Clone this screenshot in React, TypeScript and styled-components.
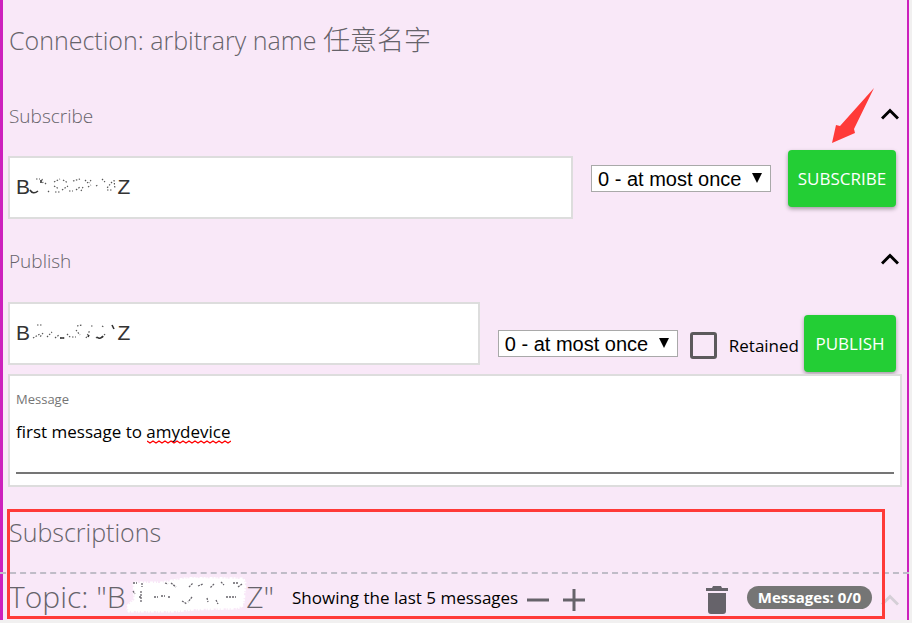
import React, { useState } from "react";
import styled, { createGlobalStyle } from "styled-components";

const sans = `"Open Sans", "Noto Sans CJK SC", sans-serif`;
const red = "#ff3a38";

const GlobalStyle = createGlobalStyle`
  *, *::before, *::after { box-sizing: border-box; }
  body { margin: 0; background: #f1f0f0; font-family: ${sans}; color: #000; }
`;

const Page = styled.main`
  position: relative;
  margin-right: 3px;
  border-left: 3px solid #cd20bd;
  border-right: 2px solid #cd20bd;
  background: #f9e8f8;
`;

const Title = styled.h1`
  margin: 0;
  padding: 20px 6px 0;
  font-size: 25px;
  line-height: 40px;
  font-weight: 300;
  color: #66636a;
`;

const HanName = styled.span`
  font-size: 27px;
  line-height: 1;
`;

const SectionHead = styled.div<{ $top: number }>`
  display: flex;
  align-items: center;
  justify-content: space-between;
  height: 32px;
  margin-top: ${(p) => p.$top}px;
  padding: 0 8px 0 6px;
`;

const SectionTitle = styled.h2`
  margin: 0;
  font-size: 19px;
  line-height: 32px;
  font-weight: 300;
  color: #66636a;
`;

const IconButton = styled.button`
  display: flex;
  padding: 0;
  border: 0;
  background: none;
  color: inherit;
  cursor: pointer;
`;

const HeadToggle = styled(IconButton)`
  margin-bottom: 4px;
`;

const Row = styled.form<{ $top: number }>`
  display: flex;
  align-items: flex-start;
  margin: ${(p) => p.$top}px 0 0;
  padding: 0 11px 0 5px;
`;

const TopicField = styled.div<{ $top: number }>`
  position: relative;
  flex: 1;
  height: 63px;
  margin: ${(p) => p.$top}px 18px 0 0;
  border: 2px solid #dddddd;
  background: #fff;
`;

const TopicInput = styled.input`
  display: block;
  width: 100%;
  height: 58px;
  padding: 0 6px;
  border: 0;
  outline: 0;
  background: transparent;
  font: 21px "Liberation Sans", sans-serif;
  color: #333;
`;

const Specks = styled.svg`
  position: absolute;
  left: 6px;
  top: 20px;
  pointer-events: none;
`;

const SelectWrap = styled.div<{ $top: number; $gap: number }>`
  position: relative;
  width: 180px;
  margin: ${(p) => p.$top}px ${(p) => p.$gap}px 0 0;
`;

const Select = styled.select`
  appearance: none;
  display: block;
  width: 100%;
  height: 27px;
  padding: 0 6px;
  border: 1px solid #a9a9a9;
  border-radius: 0;
  background: #fff;
  font: 20px "Liberation Sans", sans-serif;
  color: #000;
`;

const Caret = styled.svg`
  position: absolute;
  right: 9px;
  top: 8px;
  pointer-events: none;
`;

const ActionButton = styled.button<{ $width: number; $top: number }>`
  flex: none;
  width: ${(p) => p.$width}px;
  height: 57px;
  margin-top: ${(p) => p.$top}px;
  padding: 0;
  border: 0;
  border-radius: 4px;
  background: #23ce35;
  box-shadow: 0 2px 4px rgba(0, 0, 0, 0.35);
  color: #fff;
  font: 400 17px ${sans};
  cursor: pointer;
`;

const Retained = styled.label`
  display: flex;
  align-items: center;
  height: 30px;
  margin: 28px 5px 0 0;
  gap: 12px;
  font-size: 17px;
`;

const Checkbox = styled.input`
  appearance: none;
  width: 27px;
  height: 27px;
  margin: 0;
  border: 3px solid #5c5a5c;
  border-radius: 3px;
`;

const MessageBox = styled.div`
  position: relative;
  height: 113px;
  margin: 2px 5px 0;
  padding: 13px 6px 0;
  border: 2px solid #dddddd;
  background: #fff;
`;

const MessageLabel = styled.label`
  display: block;
  font-size: 13px;
  line-height: 20px;
  color: #757575;
`;

const MessageInput = styled.textarea`
  display: block;
  width: 100%;
  height: 65px;
  padding: 9px 0 0;
  border: 0;
  border-bottom: 2px solid #757575;
  outline: 0;
  resize: none;
  background: transparent;
  font: 17px/28px ${sans};
  color: #000;
`;

const Squiggle = styled.svg`
  position: absolute;
  left: 137px;
  top: 64px;
  pointer-events: none;
`;

const Subscriptions = styled.h1`
  height: 85px;
  margin: 0;
  padding: 24px 6px 0;
  font-size: 25px;
  line-height: 42px;
  font-weight: 300;
  color: #66636a;
`;

const TopicRow = styled.section`
  display: flex;
  align-items: center;
  height: 48px;
  margin: 0 -2px 0 -3px;
  padding: 0 10px 0 9px;
  border-top: 2px dashed #c0bcc8;
`;

const TopicName = styled.h2`
  position: relative;
  display: flex;
  justify-content: space-between;
  width: 265px;
  margin: 0 18px 0 0;
  font-size: 30px;
  line-height: 44px;
  font-weight: 300;
  color: #66636a;
`;

const Scribble = styled.svg`
  position: absolute;
  left: 116px;
  top: 2px;
`;

const Showing = styled.span`
  width: 235px;
  font-size: 17px;
`;

const CountButtons = styled.div`
  display: flex;
  flex: 1;
  gap: 14px;
  padding-top: 5px;
  color: #66636a;
`;

const TrashButton = styled(IconButton)`
  margin: 6px 19px 0 0;
  color: #66636a;
`;

const Badge = styled.span`
  width: 125px;
  height: 23px;
  margin: 0 9px 0 0;
  border-radius: 12px;
  background: #757575;
  color: #fff;
  font-size: 15px;
  font-weight: 700;
  line-height: 23px;
  text-align: center;
`;

const TopicToggle = styled(IconButton)`
  margin-top: 5px;
`;

const Highlight = styled.div`
  position: absolute;
  left: 4px;
  right: 22px;
  bottom: 1px;
  height: 110px;
  border: 3px solid ${red};
  pointer-events: none;
`;

const Arrow = styled.svg`
  position: absolute;
  right: 31px;
  top: 87px;
  pointer-events: none;
`;

const Chevron = ({ color = "#000" }: { color?: string }) => (
  <svg width="18" height="12" viewBox="0 0 18 12">
    <path d="M1 10.5 9 2.5 17 10.5" fill="none" stroke={color} strokeWidth="3" />
  </svg>
);

const speckPaths = [
  "M20 1h4M26 1l1 4M29 5l2 2M32 14l2-2M38 4l6-3M38 8l5 3M39 14h5M47 2l5 3M46 12l6-4M53 13h4M57 3l7-2M60 12l4-3M65 13l2-4M69 2l3 3M72 9l3-2M75 2l-2 3M80 8l2-1M86 1l3 3M91 12h5M96 4l-5 6M98 2l1 9",
  "M17 14l7-4M21 1h6M27 9l-3 4M31 13l5-5M39 14l4-3M44 14h6M51 10l4 4M56 13h4M61 2l5-1M60 6l4 5M70 14l4-8M75 2h3M80 13l2 2M89 10l-3 4M86 2l2 1",
];

const solidSpecks = [
  "M14 12q3 5 8 1M25 2v3",
  "M44 14h4M72 13l1-2M81 13q3 3 6-1M96 1l2 4",
];

const hidden = "\u00a0".repeat(15);

function ObscuredTopic({ label, top, variant }: { label: string; top: number; variant: number }) {
  const [text, setText] = useState(`B${hidden}Z`);
  return (
    <TopicField $top={top}>
      <TopicInput aria-label={label} value={text} onChange={(e) => setText(e.target.value)} />
      <Specks width="104" height="18" viewBox="0 0 104 18">
        <path d={speckPaths[variant]} fill="none" stroke="#555" strokeWidth="1.2" strokeDasharray="1.5 1.5" />
        <path d={solidSpecks[variant]} fill="none" stroke="#333" strokeWidth="1.6" />
      </Specks>
    </TopicField>
  );
}

function QosSelect({ label, top, gap }: { label: string; top: number; gap: number }) {
  return (
    <SelectWrap $top={top} $gap={gap}>
      <Select aria-label={label}>
        <option>0 - at most once</option>
        <option>1 - at least once</option>
        <option>2 - exactly once</option>
      </Select>
      <Caret width="10" height="10" viewBox="0 0 10 10">
        <path d="M0 0H10L5 10Z" />
      </Caret>
    </SelectWrap>
  );
}

export default function App() {
  return (
    <>
      <GlobalStyle />
      <Page>
        <Title>
          Connection: arbitrary name <HanName>任意名字</HanName>
        </Title>

        <SectionHead $top={40}>
          <SectionTitle>Subscribe</SectionTitle>
          <HeadToggle aria-label="Collapse subscribe"><Chevron /></HeadToggle>
        </SectionHead>
        <Row $top={18}>
          <ObscuredTopic label="Subscribe topic" top={6} variant={0} />
          <QosSelect label="Subscribe QoS" top={15} gap={17} />
          <ActionButton type="button" $width={108} $top={0}>SUBSCRIBE</ActionButton>
        </Row>

        <SectionHead $top={26}>
          <SectionTitle>Publish</SectionTitle>
          <HeadToggle aria-label="Collapse publish"><Chevron /></HeadToggle>
        </SectionHead>
        <Row $top={25}>
          <ObscuredTopic label="Publish topic" top={0} variant={1} />
          <QosSelect label="Publish QoS" top={28} gap={12} />
          <Retained>
            <Checkbox type="checkbox" />
            Retained
          </Retained>
          <ActionButton type="button" $width={92} $top={13}>PUBLISH</ActionButton>
        </Row>

        <MessageBox>
          <MessageLabel htmlFor="message">Message</MessageLabel>
          <MessageInput id="message" spellCheck={false} defaultValue="first message to amydevice" />
          <Squiggle width="84" height="4" viewBox="0 0 84 4">
            <path d={"M0 1" + "l3 2l3 -2".repeat(14)} fill="none" stroke="#f00" strokeWidth="1.4" />
          </Squiggle>
        </MessageBox>

        <Subscriptions>Subscriptions</Subscriptions>
        <TopicRow>
          <TopicName>
            <span>Topic: "B</span>
            <Scribble width="124" height="36" viewBox="0 0 124 36">
              <path
                d="M9 6 36 6 52 3 66 1 118 2 120 6 118 28 112 31 70 32 50 34 4 34 2 30 10 22Z"
                fill="#fff" stroke="#fff" strokeWidth="3" strokeDasharray="2 1 1 2 3 1"
              />
              <path
                d="M8 6h4M17 6v4M8 14l2 3M14 20h3M29 20h4M36 19h4M43 20h3M40 6l3 1M46 6l5 4M57 24l5 3M64 10l4-4M73 9l5-2M89 7l-4 4M96 5l3 3M108 6h6M113 10l4-3M101 20h10M91 23l2 4M82 21l1 4M67 20l-4 5M16 14v12"
                fill="none" stroke="#66636a" strokeWidth="1.3" strokeDasharray="2 1"
              />
            </Scribble>
            <span>Z"</span>
          </TopicName>
          <Showing>Showing the last 5 messages</Showing>
          <CountButtons>
            <IconButton aria-label="Show fewer messages">
              <svg width="22" height="22"><path d="M0 11H22" stroke="currentColor" strokeWidth="3" /></svg>
            </IconButton>
            <IconButton aria-label="Show more messages">
              <svg width="22" height="22"><path d="M0 11H22M11 0V22" stroke="currentColor" strokeWidth="3" /></svg>
            </IconButton>
          </CountButtons>
          <TrashButton aria-label="Clear messages">
            <svg width="22" height="28" viewBox="0 0 22 28" fill="currentColor">
              <path d="M0 2H6L7 0H15L16 2H22V5H0ZM2 7H20V25Q20 28 17 28H5Q2 28 2 25Z" />
            </svg>
          </TrashButton>
          <Badge>Messages: 0/0</Badge>
          <TopicToggle aria-label="Collapse topic"><Chevron color="#d5cfd7" /></TopicToggle>
        </TopicRow>

        <Highlight />
        <Arrow width="44" height="57" viewBox="0 0 44 57">
          <path d="M42 1 22 42 23 46 0 56 4 38 8 39Z" fill={red} />
        </Arrow>
      </Page>
    </>
  );
}
